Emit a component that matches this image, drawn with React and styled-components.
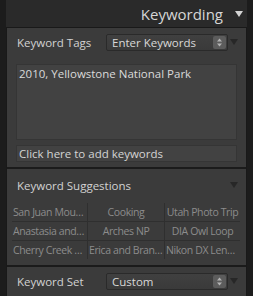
import React from 'react';
import styled, { createGlobalStyle } from 'styled-components';

const GlobalStyle = createGlobalStyle`
  body {
    margin: 0;
    background: #1c1c1c;
    font-family: "Open Sans", "Noto Sans", sans-serif;
  }
`;

const suggestions = [
  'San Juan Mountains',
  'Cooking',
  'Utah Photo Trip',
  'Anastasia and Ben',
  'Arches NP',
  'DIA Owl Loop',
  'Cherry Creek State Park',
  'Erica and Brandon',
  'Nikon DX Lens Test',
];

const Frame = styled.div`
  width: 253px;
  height: 296px;
  overflow: hidden;
  background: #1c1c1c;
  padding: 0 6px 0 6px;
  box-sizing: border-box;
`;

const Column = styled.div`
  height: 100%;
  display: flex;
  flex-direction: column;
  background: #2a2a2a;
`;

const Header = styled.div`
  height: 27px;
  flex-shrink: 0;
  display: flex;
  align-items: center;
  justify-content: flex-end;
  gap: 12px;
  padding-right: 4px;
  color: #d6d6d6;
  font-size: 15px;
`;

const Panel = styled.div`
  flex: 1;
  background: #3b3b3b;
  border: 1px solid #191919;
  border-bottom: none;
  display: flex;
  flex-direction: column;
`;

const Section = styled.div`
  display: flex;
  flex-direction: column;
  padding-bottom: ${(p) => p.$pad || 0}px;
  border-bottom: ${(p) => (p.$divider ? '2px solid #1b1b1b' : 'none')};
`;

const Row = styled.div`
  height: ${(p) => p.$h || 28}px;
  display: flex;
  align-items: center;
  padding: 0 8px 0 10px;
`;

const Label = styled.div`
  width: ${(p) => (p.$auto ? 'auto' : '89px')};
  color: #d2d2d2;
  font-size: 11.5px;
`;

const Select = styled.div`
  width: 114px;
  height: 15px;
  display: flex;
  align-items: center;
  justify-content: space-between;
  padding: 0 1px 0 5px;
  background: linear-gradient(#404040, #3a3a3a);
  border: 1px solid #2a2a2a;
  border-radius: 2px;
  color: #d8d8d8;
  font-size: 11.5px;
`;

const Spinner = styled.div`
  width: 13px;
  height: 13px;
  border-radius: 2px;
  background: #5c5c5c;
  display: flex;
  align-items: center;
  justify-content: center;
`;

const Collapse = styled.div`
  margin-left: ${(p) => (p.$inline ? '0' : 'auto')};
  width: 0;
  height: 0;
  border-left: 4px solid transparent;
  border-right: 4px solid transparent;
  border-top: 6px solid ${(p) => p.$color || '#272727'};
`;

const TextArea = styled.div`
  margin: 8px 9px 0 9px;
  height: 72px;
  background: #424242;
  border: 1px solid #353535;
  padding: 1px 2px;
  color: #dadada;
  font-size: 11.5px;
`;

const Field = styled.div`
  margin: 5px 9px 0 9px;
  height: 15px;
  background: #424242;
  border: 1px solid #353535;
  padding: 0 2px;
  display: flex;
  align-items: center;
  color: #d4d4d4;
  font-size: 11.5px;
`;

const Grid = styled.div`
  margin: 2px 6px 0 5px;
  display: grid;
  grid-template-columns: 75px 77px 1fr;
`;

const Cell = styled.div`
  height: 18px;
  line-height: 18px;
  border-bottom: ${(p) => (p.$last ? 'none' : '1px solid #2f2f2f')};
  border-left: ${(p) => (p.$first ? 'none' : '1px solid #2f2f2f')};
  color: #8c8c8c;
  font-size: 10.5px;
  letter-spacing: -0.4px;
  text-align: center;
  white-space: nowrap;
  overflow: hidden;
  text-overflow: ellipsis;
  padding: 0 1px;
`;

const Arrows = () => (
  <svg width="7" height="9" viewBox="0 0 7 9">
    <path d="M3.5 0.5 L6 3.5 L1 3.5 Z" fill="#b4b4b4" />
    <path d="M3.5 8.5 L6 5.5 L1 5.5 Z" fill="#b4b4b4" />
  </svg>
);

const Dropdown = ({ value }) => (
  <Select>
    <span>{value}</span>
    <Spinner>
      <Arrows />
    </Spinner>
  </Select>
);

export default function App() {
  return (
    <Frame>
      <GlobalStyle />
      <Column>
        <Header>
          <span>Keywording</span>
          <Collapse $inline $color="#d4d4d4" />
        </Header>
        <Panel>
          <Section $divider $pad={5}>
            <Row>
              <Label>Keyword Tags</Label>
              <Dropdown value="Enter Keywords" />
              <Collapse />
            </Row>
            <TextArea>2010, Yellowstone National Park</TextArea>
            <Field>Click here to add keywords</Field>
          </Section>
          <Section $divider $pad={6}>
            <Row $h={32}>
              <Label $auto>Keyword Suggestions</Label>
              <Collapse />
            </Row>
            <Grid>
              {suggestions.map((s, i) => (
                <Cell key={s} $first={i % 3 === 0} $last={i >= 6}>
                  {s}
                </Cell>
              ))}
            </Grid>
          </Section>
          <Section>
            <Row>
              <Label>Keyword Set</Label>
              <Dropdown value="Custom" />
              <Collapse />
            </Row>
          </Section>
        </Panel>
      </Column>
    </Frame>
  );
}
